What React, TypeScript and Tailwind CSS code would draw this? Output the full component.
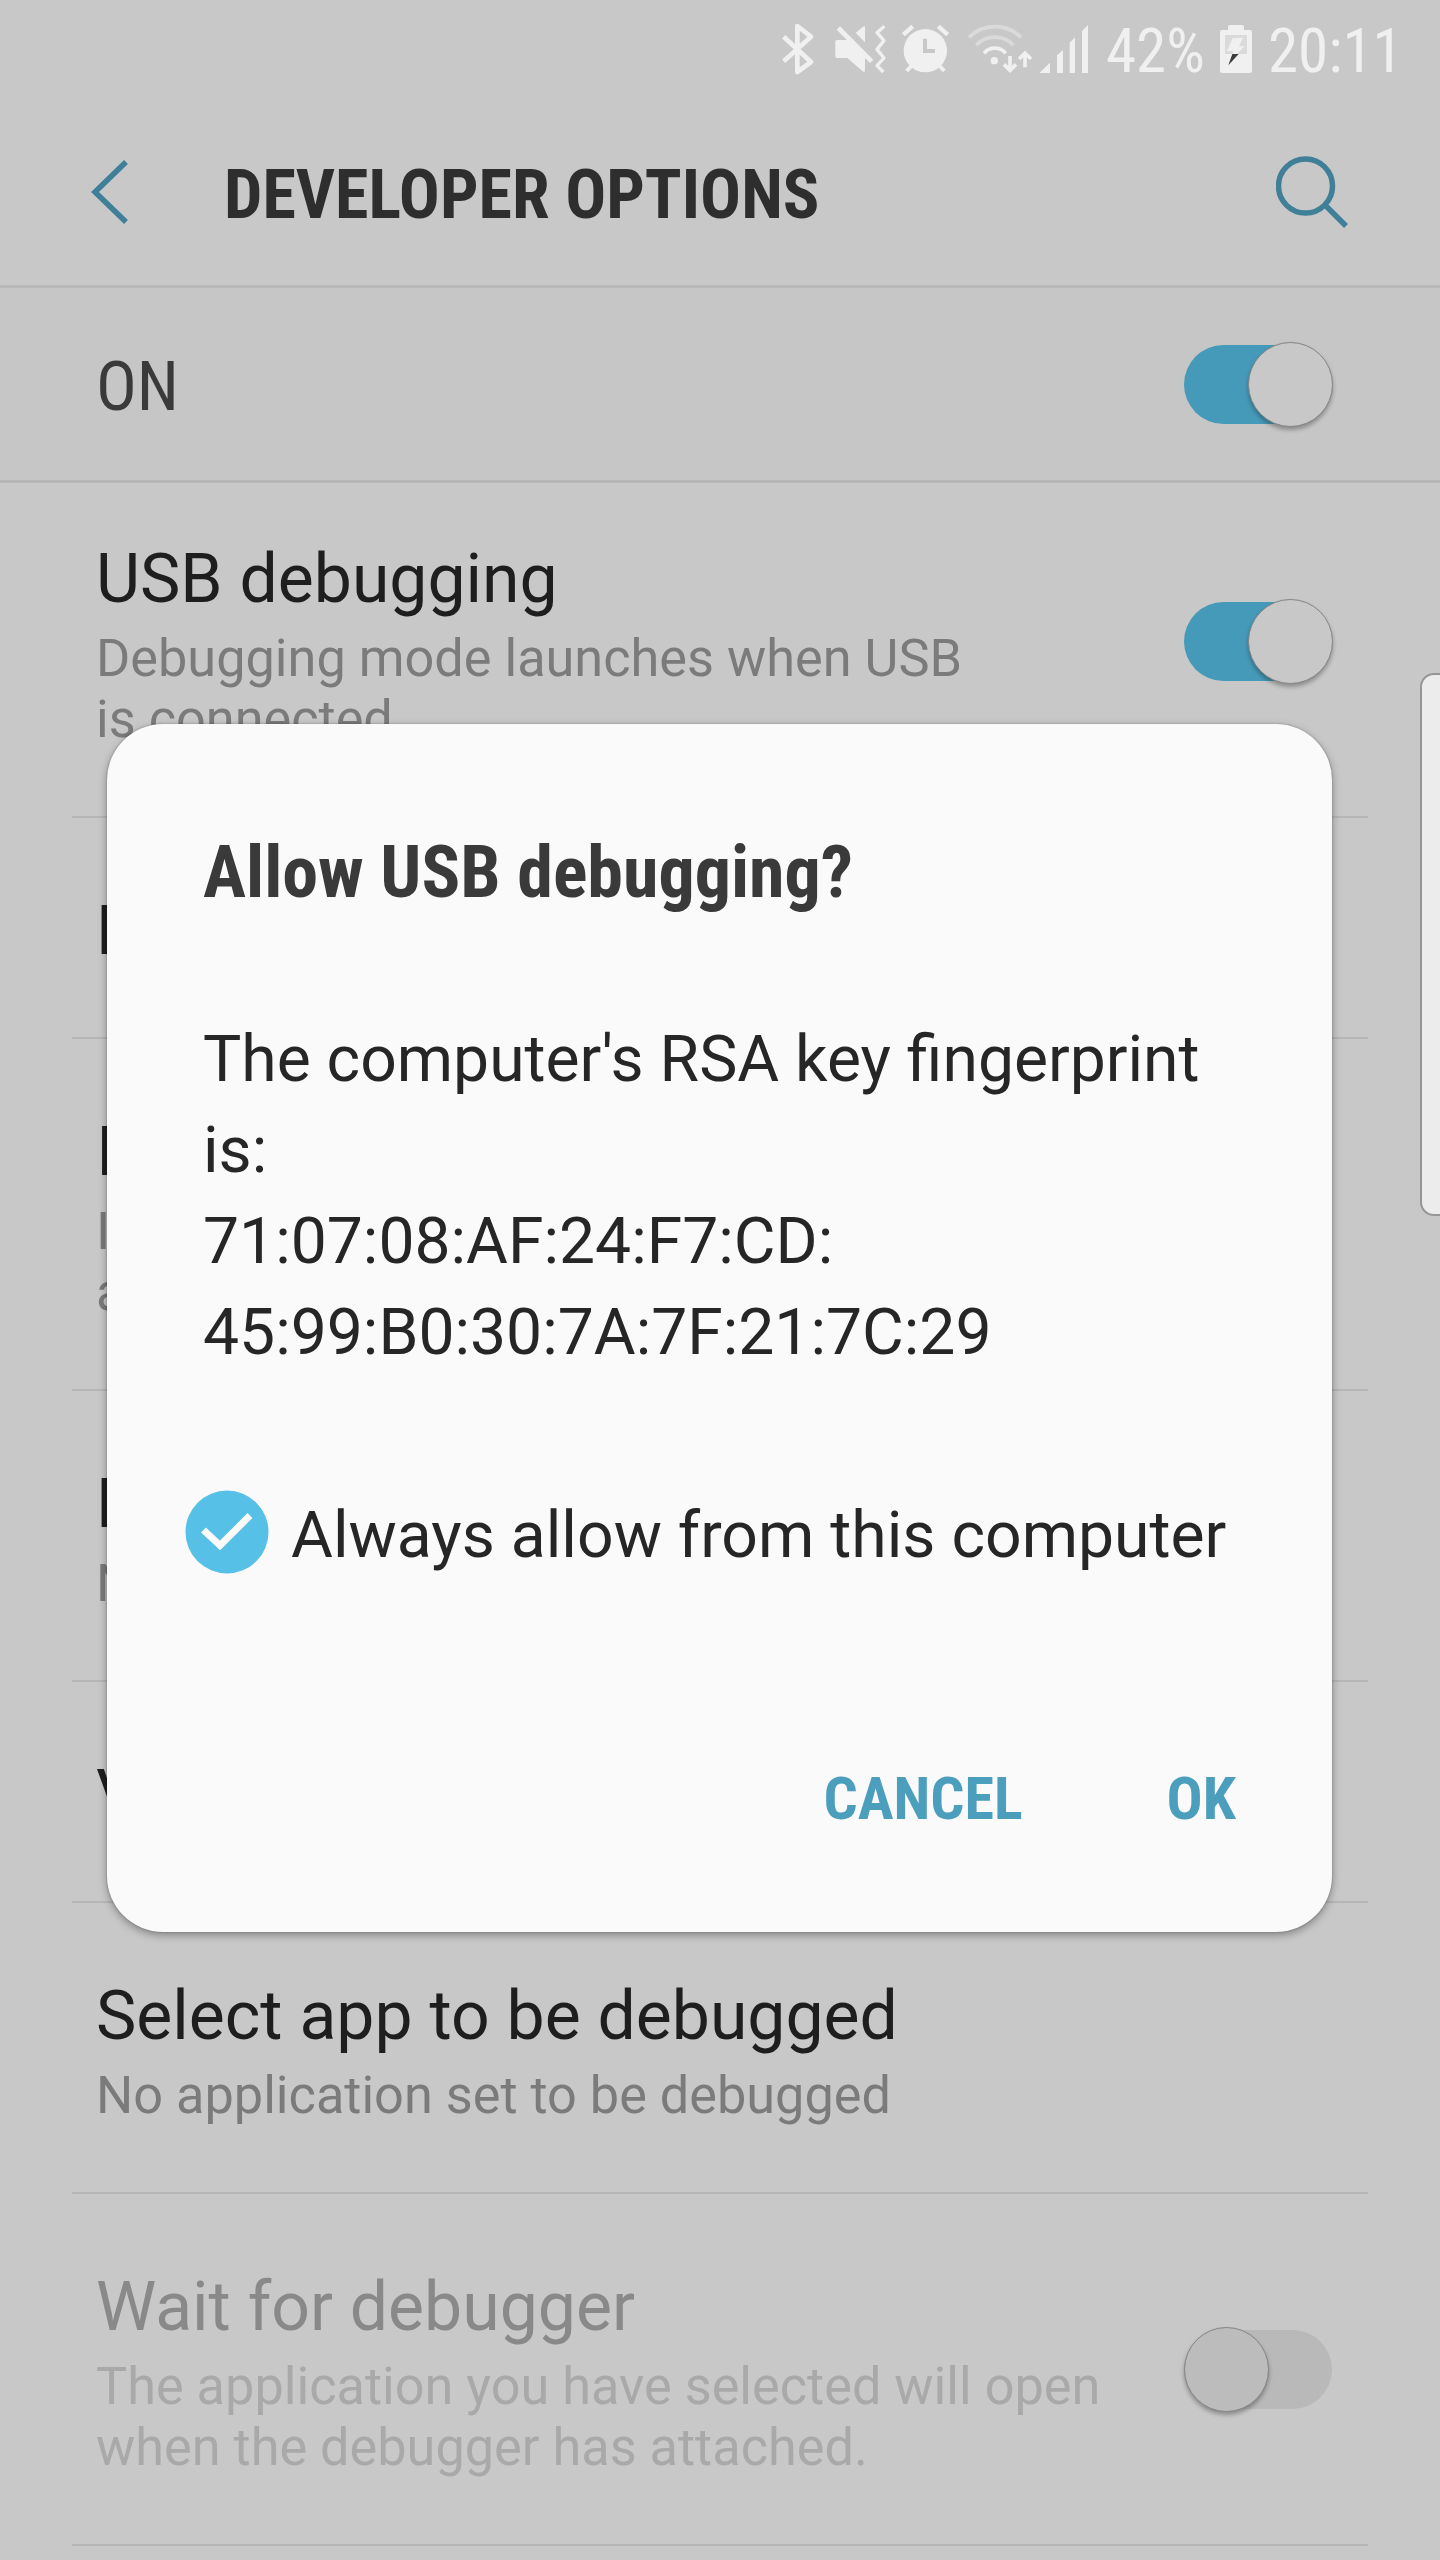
import { type ReactNode } from "react";

const CONDENSED = "font-['Roboto_Condensed',Roboto,sans-serif] [font-stretch:75%]";

function BluetoothIcon() {
  return (
    <svg className="ml-[780px] h-24 w-[35px] shrink-0" viewBox="60 0 105 288" fill="none">
      <path d="M71 110 153 186 112 216V78L153 110 71 184" stroke="#f0f0f0" strokeWidth="14" strokeLinejoin="round" />
    </svg>
  );
}

function VibrateMuteIcon() {
  return (
    <svg className="ml-[19px] h-24 w-[54px] shrink-0" viewBox="222 0 162 288" fill="none">
      <path d="M231 120H262L309 80Q315 76 315 82V211Q315 219 308 214L262 174H231Q226 174 226 169V125Q226 120 231 120Z" fill="#f0f0f0" />
      <path d="M236 65 340 169" stroke="#c8c8c8" strokeWidth="24" />
      <path d="M235 84 335 184" stroke="#f0f0f0" strokeWidth="14" />
      <path d="M373 79 351 98 372 122 351 148 372 174 351 197 370 216" stroke="#f0f0f0" strokeWidth="10" strokeLinejoin="round" />
    </svg>
  );
}

function AlarmIcon() {
  return (
    <svg className="ml-3 h-24 w-[50px] shrink-0" viewBox="420 0 150 288" fill="none" stroke="#f0f0f0">
      <circle cx="496" cy="152" r="65" fill="#f0f0f0" stroke="none" />
      <path d="M430 104 458 79M535 79 563 104" strokeWidth="13" />
      <path d="M454 198 440 213M539 198 553 213" strokeWidth="12" />
      <path d="M495 116V153H525" stroke="#c8c8c8" strokeWidth="12" />
    </svg>
  );
}

function WifiIcon() {
  return (
    <svg className="ml-4 h-24 w-[67px] shrink-0" viewBox="618 0 201 288" fill="none" stroke="#f0f0f0">
      <path d="M627 112A111 111 0 0 1 783 112M649 135A77 77 0 0 1 760 135" stroke="#dadada" strokeWidth="11" />
      <path d="M672 160A42 42 0 0 1 737 160" strokeWidth="11" />
      <circle cx="703" cy="182" r="11" fill="#f0f0f0" stroke="none" />
      <path d="M750 168V210M732 193 750 211 768 193" strokeWidth="11" />
      <path d="M795 202V160M777 177 795 159 813 177" strokeWidth="11" />
    </svg>
  );
}

function SignalIcon() {
  return (
    <svg className="ml-[6px] h-24 w-[50px] shrink-0" viewBox="837 0 150 288" fill="#f0f0f0">
      <path d="M838 219 870 188V219ZM891 219V166L909 150V219ZM929 219V128L945 112V219ZM966 219V93L984 75V219Z" />
    </svg>
  );
}

function BatteryIcon() {
  return (
    <svg className="h-24 w-8 shrink-0" viewBox="420 0 96 288">
      <path d="M426 90H444V81Q444 75 450 75H486Q492 75 492 81V90H510Q516 90 516 96V213Q516 219 510 219H426Q420 219 420 213V96Q420 90 426 90Z" fill="#f0f0f0" />
      <path d="M435 105H501V162H435Z" fill="#dadada" />
      <path d="M458 114H489L477 139H494L470 163H456L460 154H441Z" fill="#f0f0f0" />
      <path d="M457 162H476L445 196Z" fill="#3c3c3c" />
    </svg>
  );
}

function StatusBar() {
  return (
    <div className={`flex h-24 text-[61px] text-[#f0f0f0] ${CONDENSED}`}>
      <BluetoothIcon />
      <VibrateMuteIcon />
      <AlarmIcon />
      <WifiIcon />
      <SignalIcon />
      <span className="ml-[17px] w-[114px] shrink-0 whitespace-nowrap pt-1.5 leading-[90px]">42%</span>
      <BatteryIcon />
      <span className="ml-[16px] whitespace-nowrap pt-1.5 leading-[90px]">20:11</span>
    </div>
  );
}

function Switch({ on }: { on: boolean }) {
  return (
    <div
      className={`relative my-[3px] h-[79px] w-[148px] shrink-0 rounded-full ${on ? "bg-[#469ab9]" : "bg-[#b9b9b9]"}`}
    >
      <div
        className={`absolute -top-[3px] size-[85px] rounded-full border border-[#858585] shadow-[0_3px_4px_rgba(0,0,0,0.3)] ${
          on ? "-right-[1px] bg-[#c8c8c8]" : "left-0 bg-[#bcbcbc]"
        }`}
      />
    </div>
  );
}

type RowProps = { title: string; lines?: string[]; disabled?: boolean; control?: ReactNode };

function Row({ title, lines = [], disabled, control }: RowProps) {
  return (
    <div className="mx-[72px] flex items-center justify-between border-b-2 border-[#b6b6b6] pl-6 pr-9">
      <div className="pt-[73px] pb-[66px]">
        <div className={`whitespace-nowrap text-[67.9px] leading-[80px] ${disabled ? "text-[#898989]" : "text-[#1e1e1e]"}`}>
          {title}
        </div>
        {lines.length > 0 && (
          <div className={`mt-[9px] text-[52.25px] leading-[61px] ${disabled ? "text-[#a9a9a9]" : "text-[#7b7b7b]"}`}>
            {lines.map((line) => (
              <div key={line} className="whitespace-nowrap">
                {line}
              </div>
            ))}
          </div>
        )}
      </div>
      {control}
    </div>
  );
}

function Dialog() {
  return (
    <div className="absolute left-[107px] top-[724px] flex h-[1208px] w-[1225px] flex-col rounded-[56px] bg-[#fafafa] pl-24 shadow-[0_3px_8px_rgba(0,0,0,0.35),0_0_2px_rgba(0,0,0,0.3)]">
      <h2 className={`mt-[106px] whitespace-nowrap text-[72px] font-bold leading-[86px] text-[#3a3a3a] ${CONDENSED}`}>
        Allow USB debugging?
      </h2>
      <p className="mt-[98px] whitespace-nowrap text-[64.2px] leading-[91px] text-[#262626]">
        The computer's RSA key fingerprint
        <br />
        is:
        <br />
        71:07:08:AF:24:F7:CD:
        <br />
        45:99:B0:30:7A:7F:21:7C:29
      </p>
      <label className="-ml-[18px] mt-[111px] flex items-center">
        <svg className="size-[84px]" viewBox="0 0 84 84" fill="none">
          <circle cx="42" cy="42" r="41.5" fill="#57c0e6" />
          <path d="M18.5 40 35 55.5 65 25.5" stroke="#fafafa" strokeWidth="7" />
        </svg>
        <span className="ml-[22px] whitespace-nowrap pt-[7px] text-[64.25px] leading-[78px] text-[#262626]">
          Always allow from this computer
        </span>
      </label>
      <div className={`mt-[189px] flex justify-end pr-[96px] text-[60px] font-bold leading-[72px] text-[#4c9ebd] ${CONDENSED}`}>
        <button>CANCEL</button>
        <button className="ml-[144px]">OK</button>
      </div>
    </div>
  );
}

export default function App() {
  return (
    <div className="relative h-[2560px] w-[1440px] overflow-hidden bg-[#c8c8c8] font-[Roboto,sans-serif]">
      <StatusBar />
      <header className="flex h-48 items-center border-b-[3px] border-[#b8b8b8]">
        <svg className="ml-[90px] mt-[3px] h-16 w-10 shrink-0" viewBox="0 0 40 64" fill="none">
          <path d="M36 2 5 32 36 62" stroke="#3f7f98" strokeWidth="5.5" />
        </svg>
        <h1 className={`ml-[94px] whitespace-nowrap pt-2 text-[68px] font-bold leading-[80px] text-[#2e2e2e] ${CONDENSED}`}>
          DEVELOPER OPTIONS
        </h1>
        <svg className="ml-auto mr-[90px] h-[74px] w-[74px] shrink-0" viewBox="0 0 74 74" fill="none" stroke="#3f7f98" strokeWidth="5.5">
          <circle cx="29.5" cy="32" r="27" />
          <path d="M49 51 70 72" />
        </svg>
      </header>
      <div className="flex h-[195px] items-center justify-between border-b-[3px] border-[#b6b6b6] bg-[#c6c6c6] pl-24 pr-[108px]">
        <span className={`pt-[5px] text-[68px] leading-[80px] text-[#3a3a3a] ${CONDENSED}`}>ON</span>
        <Switch on />
      </div>
      <main className="-mt-[17px]">
        <Row title="USB debugging" lines={["Debugging mode launches when USB", "is connected."]} control={<Switch on />} />
        <Row title="Revoke USB debugging authorizations" />
        <Row title="Include bug reports in power menu" lines={["Include option in power menu for taking", "a bug report"]} />
        <Row title="Mock location app" lines={["No mock location app set"]} />
        <Row title="View attribute inspection" />
        <Row title="Select app to be debugged" lines={["No application set to be debugged"]} />
        <Row
          title="Wait for debugger"
          lines={["The application you have selected will open", "when the debugger has attached."]}
          disabled
          control={<Switch on={false} />}
        />
      </main>
      <div className="absolute -right-[2px] top-[673px] h-[543px] w-[22px] rounded-l-[14px] border-2 border-[#969696] bg-[#ececec]" />
      <Dialog />
    </div>
  );
}
